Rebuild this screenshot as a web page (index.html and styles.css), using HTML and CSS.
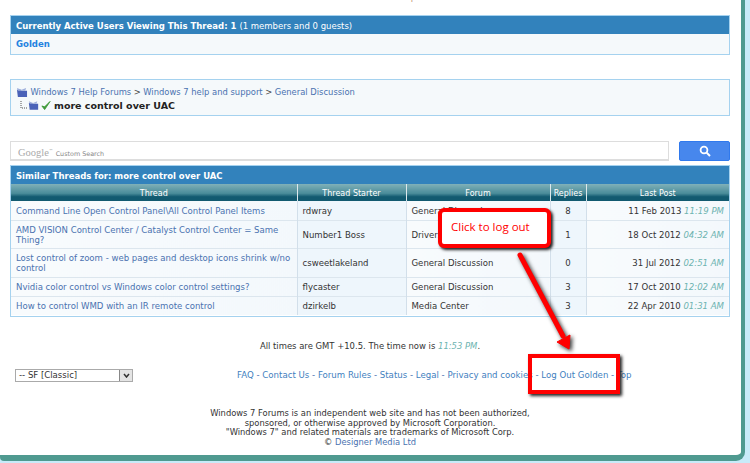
FILE: index.html

```html
<!DOCTYPE html>
<html>
    <head>
        <meta charset="UTF-8">
        <title>more control over UAC</title>
        <link rel="stylesheet" href="styles.css">
    </head>
    <body>
        <div class="page">
            <div class="prevnext">« <a>Windows 7 Restart</a> <span class="pipe">|</span> <a>Next</a> »</div>

            <div class="box active">
                <div class="boxhead">Currently Active Users Viewing This Thread: 1 <span class="normal">(1 members and 0 guests)</span></div>
                <div class="boxbody"><a class="member">Golden</a></div>
            </div>

            <div class="box crumbs">
                <div class="crumbline">
                    <svg class="ico" width="12" height="11" viewBox="0 0 13 12"><path d="M1 3h4l1 1h6v7H2z" fill="#4a62b8"/><path d="M1 1l5 2 5-2-1 3H2z" fill="#9fb0dc"/></svg>
                    <a>Windows 7 Help Forums</a> <span class="sep">&gt;</span> <a>Windows 7 help and support</a> <span class="sep">&gt;</span> <a>General Discussion</a>
                </div>
                <div class="crumbline current">
                    <svg class="tree" width="8" height="9" viewBox="0 0 8 9"><path d="M1 0v7h7" fill="none" stroke="#555" stroke-dasharray="1 1"/></svg>
                    <svg class="ico" width="11" height="11" viewBox="0 0 13 12"><path d="M1 3h4l1 1h6v7H2z" fill="#4a62b8"/><path d="M1 1l5 2 5-2-1 3H2z" fill="#9fb0dc"/></svg>
                    <svg class="check" width="10" height="11" viewBox="0 0 11 11"><path d="M1 6l3 4 6-9-6 6z" fill="#3f9a3a" stroke="#3f9a3a"/></svg>
                    <strong>more control over UAC</strong>
                </div>
            </div>

            <div class="search">
                <div class="searchinput"><span class="google">Google</span><sup class="tm">™</sup> <span class="custom">Custom Search</span></div>
                <div class="searchbtn">
                    <svg width="12" height="12" viewBox="0 0 12 12"><circle cx="5" cy="5" r="3.4" fill="none" stroke="#fff" stroke-width="1.8"/><path d="M7.6 7.6l3.4 3.4" stroke="#fff" stroke-width="2"/></svg>
                </div>
            </div>

            <div class="box similar">
                <div class="boxhead">Similar Threads for: more control over UAC</div>
                <table>
                    <thead>
                        <tr>
                            <th class="c1">Thread</th>
                            <th class="c2">Thread Starter</th>
                            <th class="c3">Forum</th>
                            <th class="c4">Replies</th>
                            <th class="c5">Last Post</th>
                        </tr>
                    </thead>
                    <tbody>
                        <tr class="r1">
                            <td class="alt1"><a>Command Line Open Control Panel\All Control Panel Items</a></td>
                            <td class="alt2">rdwray</td>
                            <td class="alt1">General Discussion</td>
                            <td class="alt2 mid">8</td>
                            <td class="alt1 right">11 Feb 2013 <i>11:19 PM</i></td>
                        </tr>
                        <tr class="r2">
                            <td class="alt1"><a>AMD VISION Control Center / Catalyst Control Center = Same Thing?</a></td>
                            <td class="alt2">Number1 Boss</td>
                            <td class="alt1">Drivers</td>
                            <td class="alt2 mid">1</td>
                            <td class="alt1 right">18 Oct 2012 <i>04:32 AM</i></td>
                        </tr>
                        <tr class="r3">
                            <td class="alt1"><a>Lost control of zoom - web pages and desktop icons shrink w/no control</a></td>
                            <td class="alt2">csweetlakeland</td>
                            <td class="alt1">General Discussion</td>
                            <td class="alt2 mid">0</td>
                            <td class="alt1 right">31 Jul 2012 <i>02:51 AM</i></td>
                        </tr>
                        <tr class="r4">
                            <td class="alt1"><a>Nvidia color control vs Windows color control settings?</a></td>
                            <td class="alt2">flycaster</td>
                            <td class="alt1">General Discussion</td>
                            <td class="alt2 mid">3</td>
                            <td class="alt1 right">17 Oct 2010 <i>12:02 AM</i></td>
                        </tr>
                        <tr class="r4">
                            <td class="alt1"><a>How to control WMD with an IR remote control</a></td>
                            <td class="alt2">dzirkelb</td>
                            <td class="alt1">Media Center</td>
                            <td class="alt2 mid">3</td>
                            <td class="alt1 right">22 Apr 2010 <i>01:31 AM</i></td>
                        </tr>
                    </tbody>
                </table>
            </div>

            <div class="times">All times are GMT +10.5. The time now is <i>11:53 PM</i>.</div>

            <div class="footlinks">
                <div class="skin"><span>-- SF [Classic]</span><b class="skinarrow"><svg width="7" height="5" viewBox="0 0 7 5"><path d="M1 1l2.5 3L6 1" fill="none" stroke="#333" stroke-width="1.5"/></svg></b></div>
                <div class="links"><a>FAQ</a> - <a>Contact Us</a> - <a>Forum Rules</a> - <a>Status</a> - <a>Legal</a> - <a>Privacy and cookies</a> - <a>Log Out Golden</a> - <a>Top</a></div>
            </div>

            <div class="legal">
                Windows 7 Forums is an independent web site and has not been authorized,<br>
                sponsored, or otherwise approved by Microsoft Corporation.<br>
                "Windows 7" and related materials are trademarks of Microsoft Corp.<br>
                © <a>Designer Media Ltd</a>
            </div>

            <div class="callout">Click to log out</div>
            <svg class="arrow" width="90" height="120" viewBox="0 0 90 120">
                <path d="M8 5L51 86" fill="none" stroke="#f00" stroke-width="5" stroke-linecap="round"/>
                <path d="M45 92L58 85L57 99z" fill="#f00" stroke="#f00"/>
            </svg>
            <div class="redbox"></div>
        </div>
    </body>
</html>
```

FILE: styles.css

```css
html, body { height: 100%; }
* { margin: 0; padding: 0; box-sizing: border-box; }
body { background: #c8ebf9; font-family: "DejaVu Sans", Verdana, sans-serif; font-size: 8.55px; color: #333; overflow: hidden; }
a { color: #4a72b0; }

.page { position: relative; width: 745px; height: 461px; padding: 0 11px 0 10px; background: #fff; border-right: 4px solid #4f9a90; border-bottom: 6px solid #4f9a90; border-bottom-right-radius: 9px; border-bottom-left-radius: 4px; overflow: hidden; }

.prevnext { height: 15px; margin-top: -9px; padding-left: 310px; line-height: 12px; color: #888; }
.pipe { color: #c08a6a; }

.box { border: 1px solid #a5d2ef; background: #f5f9fb; }
.boxhead { height: 18px; padding-left: 5px; background: #3282bc; color: #fff; font-size: 8.5px; font-weight: bold; line-height: 20px; }
.normal { font-weight: normal; }

.active { height: 40px; margin-top: 9px; }
.boxbody { padding-left: 5px; line-height: 21px; }
.member { color: #1f82e0; font-weight: bold; }

.crumbs { height: 37px; margin-top: 24px; padding: 6px 0 0 5px; font-size: 8.4px; }
.crumbline { display: flex; align-items: center; gap: 2.5px; height: 12px; white-space: nowrap; }
.sep { color: #444; }
.current { padding-left: 4px; font-size: 9.5px; gap: 0; height: 14px; }
.current strong { margin-left: 3px; color: #222; }
.check { margin-left: 2px; }

.search { display: flex; justify-content: space-between; height: 20px; margin-top: 25px; }
.searchinput { width: 659px; border: 1px solid #ddd; border-bottom-width: 2px; padding-left: 7px; line-height: 17px; color: #999; }
.google { font-family: "Liberation Serif", serif; font-size: 10.5px; color: #aaa; }
.tm { font-size: 4px; }
.custom { font-size: 6.4px; color: #888; }
.searchbtn { display: flex; align-items: center; justify-content: center; width: 51px; background: #4787ed; border: 1px solid #3079ed; border-radius: 2px; }

.similar { height: 152px; margin-top: 4px; background: #fff; }
table { width: 718px; border-collapse: collapse; table-layout: fixed; }
th { height: 17px; padding: 1px 0 0; font-weight: normal; font-size: 8px; color: #fff; background: linear-gradient(#7fb0b8, #4a8c9a 55%, #125a70 75%, #125a70); border-left: 1px solid #dce8ec; }
th:first-child { border-left: 0; }
.c1 { width: 286px; }
.c2 { width: 109px; }
.c3 { width: 144px; }
.c4 { width: 36px; }
td { padding: 1px 5px 0; line-height: 10px; border-top: 1px solid #dce6ee; border-left: 1px solid #d2dfea; }
td:first-child { border-left: 0; }
.alt1 { background: linear-gradient(90deg, #f8fbfd, #f3f8fc); }
.alt2 { background: #eef6fc; }
.r1 td { height: 19px; border-top: 0; }
.r2 td { height: 28px; }
.r3 td { height: 29px; }
.r4 td { height: 19px; }
.mid { text-align: center; }
.right { text-align: right; }
i { color: #6db3b0; }

.times { margin-top: 23px; text-align: center; font-size: 8.45px; line-height: 12px; }

.footlinks { display: flex; align-items: center; height: 14px; margin-top: 16px; padding-left: 5px; }
.skin { display: flex; justify-content: space-between; width: 118px; height: 13px; border: 1px solid #aaa; padding-left: 3px; line-height: 11px; color: #333; }
.skinarrow { display: flex; align-items: center; justify-content: center; width: 13px; background: #e4e4e4; border-left: 1px solid #888; }
.links { margin-left: 104px; font-size: 8.62px; white-space: nowrap; color: #4a72b0; }
.links a { color: #3f7fc0; }

.legal { margin-top: 27px; text-align: center; font-size: 8.35px; line-height: 9.7px; }

.callout { position: absolute; left: 438px; top: 208px; width: 113px; height: 40px; padding: 7px 0 0 9px; background: #fff; border: 4px solid #f00; border-radius: 6px; box-shadow: 2px 2px 3px #222; color: #f00; font-size: 11.5px; font-family: "Open Sans", sans-serif; }
.arrow { position: absolute; left: 512px; top: 250px; filter: drop-shadow(2px 2px 2px #333); }
.redbox { position: absolute; left: 528px; top: 354px; width: 92px; height: 40px; border: 4px solid #f00; box-shadow: 2px 2px 3px #222; }
```
